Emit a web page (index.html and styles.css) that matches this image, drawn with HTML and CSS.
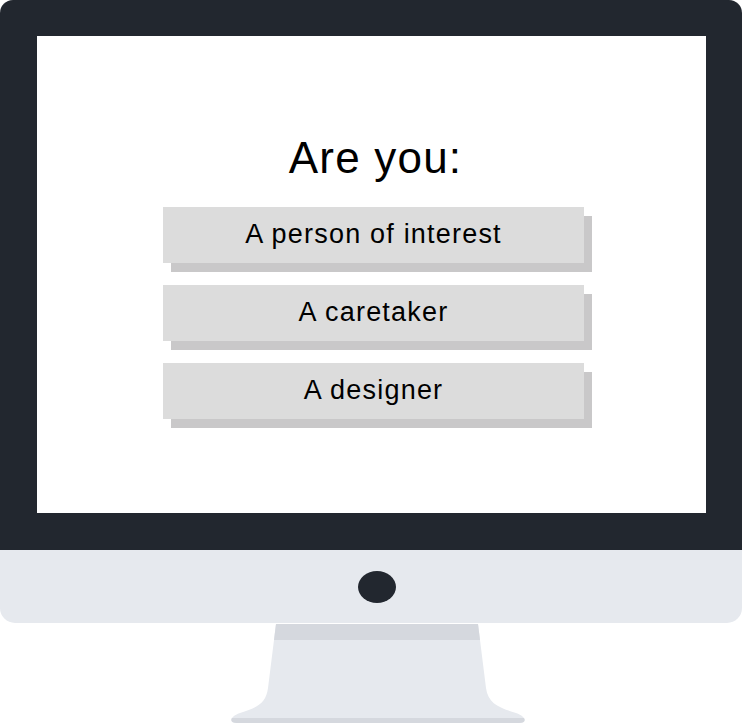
FILE: index.html
```html
<!DOCTYPE html>
<html>
<head>
<meta charset="utf-8">
<link rel="stylesheet" href="styles.css">
</head>
<body>
<div class="monitor">
  <div class="bezel">
    <div class="screen">
      <h1 class="title">Are you:</h1>
      <div class="options">
        <button class="option">A person of interest</button>
        <button class="option">A caretaker</button>
        <button class="option">A designer</button>
      </div>
    </div>
  </div>
  <div class="chin"><span class="logo"></span></div>
  <svg class="stand" width="742" height="99" viewBox="0 0 742 99">
    <defs>
      <clipPath id="standClip">
        <path d="M276,0 L478,0 L486,64 C488,80 500,84 516,89 C527,93 527,99 519,99 L237,99 C229,99 229,93 240,89 C256,84 266,80 268,64 Z"/>
      </clipPath>
    </defs>
    <g clip-path="url(#standClip)">
      <rect x="0" y="0" width="742" height="99" fill="#e6e9ee"/>
      <rect x="0" y="0" width="742" height="16" fill="#d5d8de"/>
      <rect x="0" y="94" width="742" height="5" fill="#d5d8de"/>
    </g>
  </svg>
</div>
</body>
</html>
```

FILE: styles.css
```css
html, body {
  margin: 0;
  padding: 0;
  background: #ffffff;
}

.monitor {
  width: 742px;
  height: 723px;
  display: flex;
  flex-direction: column;
}

.bezel {
  background: #22272f;
  border-radius: 13px 13px 0 0;
  padding: 36px 36px 37px 37px;
  height: 550px;
  box-sizing: border-box;
}

.screen {
  background: #ffffff;
  height: 477px;
  display: flex;
  flex-direction: column;
}

.title {
  margin: 0;
  padding-top: 102px;
  height: 40px;
  line-height: 40px;
  font-family: "Liberation Sans", Arial, sans-serif;
  font-weight: normal;
  font-size: 44px;
  letter-spacing: 1.2px;
  color: #000000;
  text-align: center;
  padding-left: 8px;
}

.options {
  margin-top: 29px;
  margin-left: 126px;
  width: 421px;
  display: flex;
  flex-direction: column;
  gap: 22px;
}

.option {
  height: 56px;
  border: 0;
  padding: 0;
  background: #dcdcdc;
  box-shadow: 8px 9px 0 #c9c8c9;
  font-family: "Liberation Sans", Arial, sans-serif;
  font-size: 27px;
  letter-spacing: 1.2px;
  color: #000000;
  text-align: center;
  line-height: 52px;
  padding-bottom: 2px;
}

.chin {
  height: 73px;
  background: #e6e9ee;
  border-radius: 0 0 15px 15px;
  display: flex;
  justify-content: center;
  align-items: center;
  padding-left: 12px;
}

.logo {
  width: 38px;
  height: 32px;
  border-radius: 50%;
  background: #22272f;
}

.stand {
  display: block;
  margin-top: 1px;
}
```
